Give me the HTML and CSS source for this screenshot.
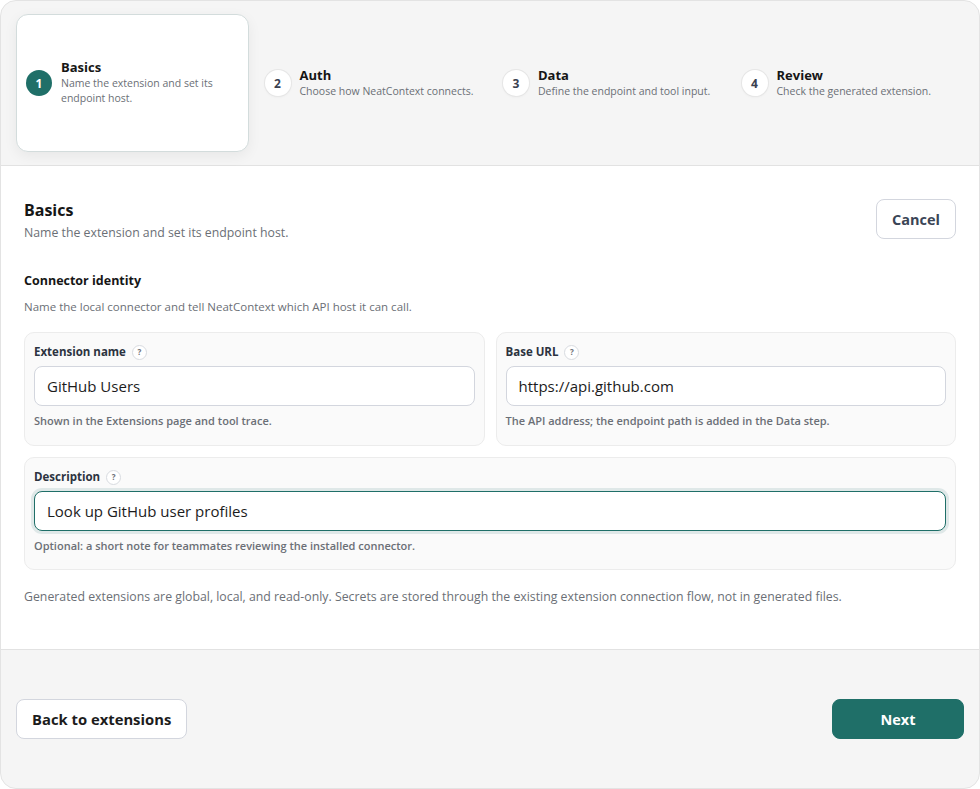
FILE: index.html
```html
<!DOCTYPE html>
<html lang="en">
<head>
  <meta charset="UTF-8" />
  <meta name="viewport" content="width=device-width, initial-scale=1.0"/>
  <title>New extension</title>
  <link rel="stylesheet" href="styles.css">
</head>
<body>
  <div class="wizard">

    <!-- Passos -->
    <div class="steps">
      <div class="step active">
        <span class="step-num">1</span>
        <div class="step-text">
          <h3>Basics</h3>
          <p>Name the extension and set its endpoint host.</p>
        </div>
      </div>
      <div class="step">
        <span class="step-num">2</span>
        <div class="step-text">
          <h3>Auth</h3>
          <p>Choose how NeatContext connects.</p>
        </div>
      </div>
      <div class="step">
        <span class="step-num">3</span>
        <div class="step-text">
          <h3>Data</h3>
          <p>Define the endpoint and tool input.</p>
        </div>
      </div>
      <div class="step">
        <span class="step-num">4</span>
        <div class="step-text">
          <h3>Review</h3>
          <p>Check the generated extension.</p>
        </div>
      </div>
    </div>

    <div class="content">
      <div class="content-head">
        <div>
          <h2>Basics</h2>
          <p class="sub">Name the extension and set its endpoint host.</p>
        </div>
        <button class="btn">Cancel</button>
      </div>

      <h4 class="group-title">Connector identity</h4>
      <p class="group-desc">Name the local connector and tell NeatContext which API host it can call.</p>

      <div class="fields">
        <div class="field">
          <label>Extension name <span class="hint">?</span></label>
          <input type="text" value="GitHub Users">
          <small>Shown in the Extensions page and tool trace.</small>
        </div>
        <div class="field">
          <label>Base URL <span class="hint">?</span></label>
          <input type="text" value="https://api.github.com">
          <small>The API address; the endpoint path is added in the Data step.</small>
        </div>
        <div class="field wide">
          <label>Description <span class="hint">?</span></label>
          <input type="text" class="focus" value="Look up GitHub user profiles">
          <small>Optional: a short note for teammates reviewing the installed connector.</small>
        </div>
      </div>

      <p class="note">Generated extensions are global, local, and read-only. Secrets are stored through the existing extension connection flow, not in generated files.</p>
    </div>

    <div class="footer">
      <button class="btn dark">Back to extensions</button>
      <button class="btn primary">Next</button>
    </div>
  </div>
</body>
</html>
```

FILE: styles.css
```css
* {
  box-sizing: border-box;
  margin: 0;
  padding: 0;
}

body {
  font-family: 'Open Sans', 'Noto Sans', sans-serif;
  background: #fff;
  color: #1c1c1c;
}

.wizard {
  width: 980px;
  height: 789px;
  background: #f5f5f5;
  border: 1px solid #e3e3e3;
  border-radius: 16px;
  overflow: hidden;
  display: flex;
  flex-direction: column;
}

/* Passos */
.steps {
  display: grid;
  grid-template-columns: repeat(4, 1fr);
  gap: 6px;
  padding: 13px 15px 13px;
  border-bottom: 1px solid #e2e2e2;
}

.step {
  height: 138px;
  display: flex;
  align-items: center;
  gap: 9px;
  padding: 0 0 0 9px;
  border: 1px solid transparent;
  border-radius: 12px;
}

.step.active {
  background: #fff;
  border-color: #d3dcdc;
  box-shadow: 0 4px 14px rgba(0, 0, 0, 0.06);
  padding-right: 30px;
}

.step-num {
  flex: none;
  width: 26px;
  height: 26px;
  border-radius: 50%;
  background: #fff;
  box-shadow: 0 0 0 1px #e6e6e6, 0 1px 3px rgba(0,0,0,0.06);
  display: flex;
  align-items: center;
  justify-content: center;
  font-size: 12px;
  font-weight: 700;
  color: #3a4150;
}

.step.active .step-num {
  background: #1f6f68;
  color: #fff;
  box-shadow: none;
}

.step-text h3 {
  font-size: 13px;
  font-weight: 700;
  color: #161616;
  line-height: 17px;
}

.step-text p {
  font-size: 10.5px;
  color: #6b6f76;
  line-height: 15px;
  white-space: nowrap;
}

.step.active .step-text {
  margin-top: -2px;
}

.step.active .step-text p {
  white-space: normal;
}

/* Conteudo */
.content {
  background: #fff;
  padding: 33px 23px 0;
  height: 484px;
  border-bottom: 1px solid #e2e2e2;
}

.content-head {
  display: flex;
  justify-content: space-between;
  align-items: flex-start;
}

.content-head h2 {
  font-size: 16px;
  font-weight: 700;
  line-height: 22px;
  color: #161616;
}

.sub {
  font-size: 12.3px;
  color: #6b6f76;
  line-height: 18px;
  margin-top: 3px;
}

.btn {
  font-family: inherit;
  font-size: 14.5px;
  font-weight: 700;
  color: #3a4556;
  background: #fff;
  border: 1px solid #d3d6de;
  border-radius: 8px;
  padding: 0 15px;
  height: 40px;
}

.btn.dark {
  color: #1c1c1c;
  padding: 0 15px;
  font-size: 14.8px;
}

.btn.primary {
  background: #1f6f68;
  border-color: #1f6f68;
  color: #fff;
  width: 132px;
}

.group-title {
  font-size: 12.5px;
  font-weight: 700;
  color: #161616;
  margin-top: 30px;
  line-height: 18px;
}

.group-desc {
  font-size: 11.5px;
  color: #6b6f76;
  margin-top: 9px;
  line-height: 16px;
}

.fields {
  display: grid;
  grid-template-columns: 1fr 1fr;
  gap: 11px;
  margin-top: 17px;
}

.field {
  background: #fafafa;
  border: 1px solid #ececec;
  border-radius: 10px;
  padding: 10px 9px 14px;
  height: 114px;
}

.field.wide {
  grid-column: span 2;
  height: 113px;
}

.field label {
  display: flex;
  align-items: center;
  gap: 6px;
  font-size: 11.5px;
  font-weight: 700;
  color: #2c3340;
  line-height: 18px;
}

.hint {
  width: 15px;
  height: 15px;
  border: 1px solid #d8dbe0;
  border-radius: 50%;
  font-size: 8px;
  display: flex;
  align-items: center;
  justify-content: center;
  color: #6b6f76;
  background: #fff;
}

.field input {
  display: block;
  width: 100%;
  height: 40px;
  margin-top: 5px;
  padding: 0 12px;
  font-family: inherit;
  font-size: 15px;
  color: #1c1c1c;
  background: #fff;
  border: 1px solid #d3d6de;
  border-radius: 8px;
  outline: none;
}

.field input.focus {
  border-color: #1f6f68;
  box-shadow: 0 0 0 3px rgba(31, 111, 104, 0.12);
}

.field small {
  display: block;
  font-size: 11px;
  color: #6b6f76;
  font-weight: 600;
  margin-top: 7px;
}

.note {
  font-size: 12.3px;
  color: #6b6f76;
  margin-top: 18px;
}

/* Rodape */
.footer {
  flex: 1;
  display: flex;
  justify-content: space-between;
  align-items: center;
  padding: 0 15px;
}
```
